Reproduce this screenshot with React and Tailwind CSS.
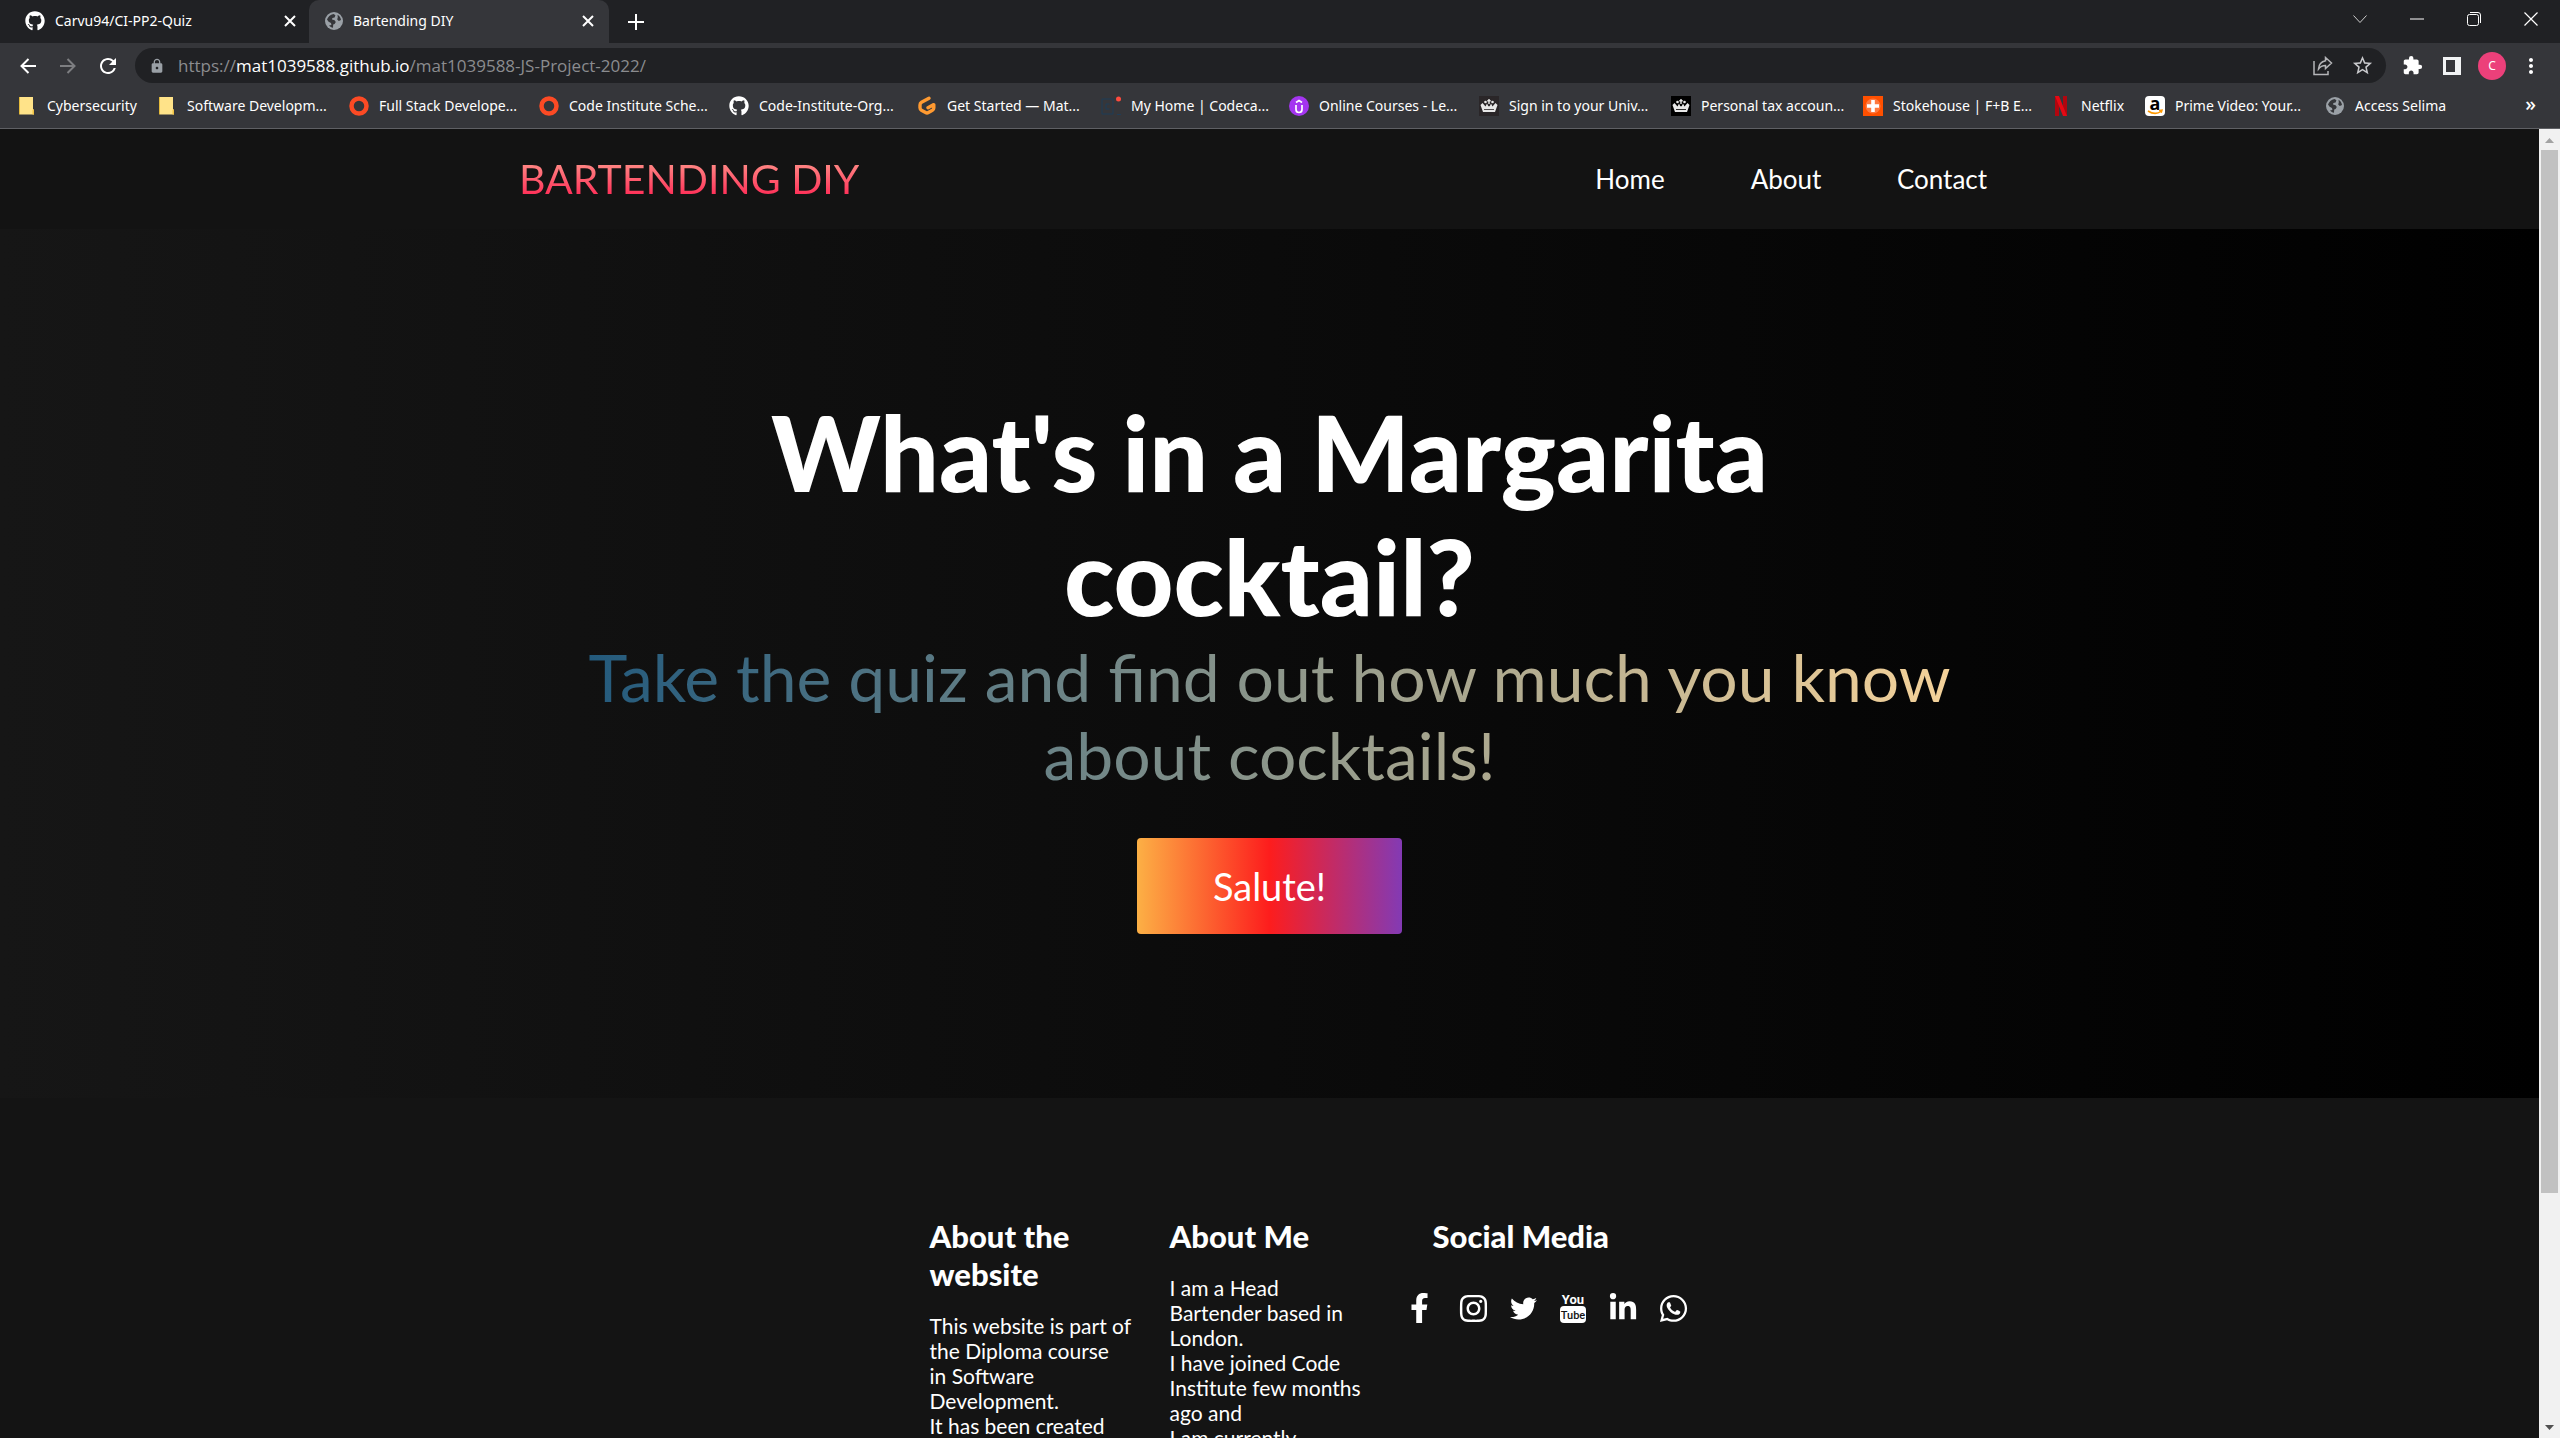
import React from "react";
import { FaFacebookF, FaInstagram, FaTwitter, FaLinkedinIn, FaWhatsapp, FaGithub } from "react-icons/fa";
import { MdExtension, MdLock, MdMoreVert, MdRefresh, MdStarBorder } from "react-icons/md";

const Globe = () => (
  <svg viewBox="0 0 18 18" className="h-[18px] w-[18px]" aria-hidden="true">
    <circle cx="9" cy="9" r="9" fill="#9aa0a6" />
    <path d="M2 7.500C3 5 5 2.600 8.600 2L10.400 3.200 9.600 5.400 7.400 6 7 7.600 9.600 8.200 10.800 10 9.600 12 8.200 12.600 8 15.800C6.600 15.600 5 14.800 4 13.600L6.400 13 6 11 3.600 9.800ZM12.500 2.800C14.600 4 15.800 6 16 8L13.800 9 12.200 7.400 12.800 5.200Z" fill="#35363a" />
  </svg>
);

const Folder = () => (
  <svg viewBox="0 0 16 20" className="h-5 w-4" aria-hidden="true">
    <path d="M1 1h13v12l1 1v4.500h-14z" fill="#ffe389" />
    <path d="M1 18.500h12.500v-4.500l1.500-.8v5.300z" fill="#f0c243" />
    <path d="M0.500 1v17.500" stroke="#e5bb3c" />
  </svg>
);

const Ring = () => (
  <svg viewBox="0 0 20 20" className="h-5 w-5" aria-hidden="true">
    <circle cx="10" cy="10" r="7.500" fill="none" stroke="#fc4a24" strokeWidth="4.500" />
  </svg>
);

const Gitpod = () => (
  <svg viewBox="0 0 20 20" className="h-5 w-5" aria-hidden="true">
    <path d="M12 2.200 4.500 6.300Q3 7.200 3 9v2.800q0 1.600 1.400 2.400l4.200 2.400q1.400.8 2.800 0l4-2.300q1.400-.8 1.400-2.400V8.600L11 11.800" fill="none" stroke="#ff9a31" strokeWidth="3.400" strokeLinejoin="round" strokeLinecap="round" />
  </svg>
);

const Codecademy = () => (
  <svg viewBox="0 0 20 20" className="h-5 w-5" aria-hidden="true">
    <path d="M1 3h11v15H1z M16 18.500h4" fill="none" stroke="#1f3d57" />
    <path d="M8.500 8H5v5h3.500" fill="none" stroke="#1f3d57" />
    <circle cx="17.500" cy="3" r="2.500" fill="#ff4b3e" />
  </svg>
);

const Udemy = () => (
  <svg viewBox="0 0 20 20" className="h-5 w-5" aria-hidden="true">
    <circle cx="10" cy="10" r="10" fill="#a435f0" />
    <path d="M7 9v4.500a3 3 0 0 0 6 0V9M7 6.500l3-2 3 2" fill="none" stroke="#fff" strokeWidth="1.700" />
  </svg>
);

const Crown = ({ bg }) => (
  <svg viewBox="0 0 20 20" className="h-5 w-5" aria-hidden="true">
    <path d="M0 0h20v20H0z" fill={bg} />
    <path d="M4 16 1.500 9 3.500 7l3 3.500L8 7.500l1.300 2.800h1.400L12 7.500l1.500 3 3-3.500 2 2L16 16z" fill="#e8e8e8" />
    <path d="M10 3v5M8.300 4.700h3.400" stroke="#e8e8e8" strokeWidth="1.400" />
    <circle cx="6.500" cy="6" r="1.300" fill="#e8e8e8" />
    <circle cx="13.500" cy="6" r="1.300" fill="#e8e8e8" />
    <path d="M5 13.500h10" stroke={bg} strokeWidth=".8" />
  </svg>
);

const Plus = () => (
  <svg viewBox="0 0 20 20" className="h-5 w-5" aria-hidden="true">
    <path d="M0 0h20v20H0z" fill="#ff5000" />
    <circle cx="10" cy="10" r="7.500" fill="#ff7a40" />
    <path d="M10 4v12M4 10h12" stroke="#fff" strokeWidth="3.600" />
  </svg>
);

const Netflix = () => (
  <svg viewBox="0 0 20 20" className="h-5 w-5" aria-hidden="true">
    <path d="M4 0h4v20H4zM12 0h4v20h-4z" fill="#b1060f" />
    <path d="M4 0h4l8 20h-4z" fill="#e50914" />
  </svg>
);

const Amazon = () => (
  <span className="relative flex h-5 w-5 justify-center rounded-sm bg-white">
    <span className="text-[18px] leading-[14px] font-bold text-black">a</span>
    <svg viewBox="0 0 20 20" className="absolute inset-0 h-5 w-5" aria-hidden="true">
      <path d="M3 15q7 4.500 13 .5M14 14.500l3-.3-.8 2.600" fill="none" stroke="#ff9900" strokeWidth="1.500" />
    </svg>
  </span>
);

const bookmarks = [
  ["Cybersecurity", <Folder />, "w-[140px]"],
  ["Software Developm...", <Folder />, "w-[192px]"],
  ["Full Stack Develope...", <Ring />, "w-[190px]"],
  ["Code Institute Sche...", <Ring />, "w-[190px]"],
  ["Code-Institute-Org...", <FaGithub className="h-5 w-5" />, "w-[188px]"],
  ["Get Started — Mat...", <Gitpod />, "w-[184px]"],
  ["My Home | Codeca...", <Codecademy />, "w-[188px]"],
  ["Online Courses - Le...", <Udemy />, "w-[190px]"],
  ["Sign in to your Univ...", <Crown bg="#2a2628" />, "w-[192px]"],
  ["Personal tax accoun...", <Crown bg="#000" />, "w-[192px]"],
  ["Stokehouse | F+B E...", <Plus />, "w-[188px]"],
  ["Netflix", <Netflix />, "w-[94px]"],
  ["Prime Video: Your...", <Amazon />, "w-[180px]"],
  ["Access Selima", <Globe />, "w-[140px]"],
];

const CloseX = () => (
  <svg viewBox="0 0 12 12" className="h-3 w-3" aria-hidden="true">
    <path d="M1 1l10 10M11 1L1 11" stroke="#fff" strokeWidth="2" />
  </svg>
);

function TabStrip() {
  return (
    <div className="flex h-[43px] shrink-0 bg-[#202124]">
      <div className="flex w-[309px] items-center pr-[13px] pb-px pl-[25px]">
        <FaGithub className="h-5 w-5" />
        <span className="ml-[10px] flex-1 pb-px text-sm">Carvu94/CI-PP2-Quiz</span>
        <button aria-label="Close tab"><CloseX /></button>
      </div>
      <div className="flex w-[300px] items-center rounded-t-[10px] bg-[#35363a] pr-[15px] pb-px pl-4">
        <Globe />
        <span className="ml-[10px] flex-1 pb-px text-sm">Bartending DIY</span>
        <button aria-label="Close tab"><CloseX /></button>
      </div>
      <button aria-label="New tab" className="ml-[19px]">
        <svg viewBox="0 0 16 16" className="h-4 w-4" aria-hidden="true"><path d="M8 0v16M0 8h16" stroke="#fff" strokeWidth="2" /></svg>
      </button>
      <div className="ml-auto flex h-[37px] items-center">
        <button aria-label="Search tabs" className="flex w-[57px] justify-center">
          <svg viewBox="0 0 14 8" className="h-2 w-[14px]"><path d="M.5.5 7 7.500 13.500.5" fill="none" stroke="#ccc" /></svg>
        </button>
        <button aria-label="Minimise" className="flex w-[57px] justify-center">
          <svg viewBox="0 0 14 2" className="h-[2px] w-[14px]"><path d="M0 1h14" stroke="#fff" /></svg>
        </button>
        <button aria-label="Restore" className="flex w-[57px] justify-center">
          <svg viewBox="0 0 14 14" className="h-[14px] w-[14px]"><path d="M.5 4.500a2 2 0 0 1 2-2h7a2 2 0 0 1 2 2v7a2 2 0 0 1-2 2h-7a2 2 0 0 1-2-2zM3 .5h8a2.500 2.500 0 0 1 2.500 2.500v8" fill="none" stroke="#fff" /></svg>
        </button>
        <button aria-label="Close window" className="flex w-[58px] justify-center">
          <svg viewBox="0 0 14 14" className="h-[14px] w-[14px]"><path d="M.5.5l13 13M13.500.5l-13 13" stroke="#fff" strokeWidth="1.200" /></svg>
        </button>
      </div>
    </div>
  );
}

function Toolbar() {
  return (
    <div className="flex h-[45px] shrink-0 items-center bg-[#35363a]">
      <div className="flex w-[135px] items-center pl-2">
        <button aria-label="Back" className="flex w-10 justify-center">
          <svg viewBox="0 0 16 16" className="h-4 w-4"><path d="M16 8H1.500M8.500 1 1.500 8l7 7" fill="none" stroke="#fff" strokeWidth="2" /></svg>
        </button>
        <button aria-label="Forward" className="flex w-10 justify-center">
          <svg viewBox="0 0 16 16" className="h-4 w-4"><path d="M0 8h14.500M7.500 1l7 7-7 7" fill="none" stroke="#7d7e81" strokeWidth="2" /></svg>
        </button>
        <button aria-label="Reload" className="flex w-10 justify-center"><MdRefresh className="h-6 w-6" /></button>
      </div>
      <div className="flex h-[35px] flex-1 items-center rounded-full bg-[#202124] pr-3 pl-[14px]">
        <MdLock className="h-4 w-4 text-[#9aa0a6]" />
        <a href="#home" className="ml-[13px] flex-1 font-['Open_Sans',sans-serif] text-[17px] text-[#8b8c8f]">
          https://<span className="text-white">mat1039588.github.io</span>/mat1039588-JS-Project-2022/
        </a>
        <button aria-label="Share" className="mr-[18px]">
          <svg viewBox="0 0 20 20" className="h-5 w-5"><path d="M1 5v13.500h14V15M12.500 1.500 18.500 7l-6 5.500V9.500Q8 9.500 5.500 13 6 6 12.500 4.800z" fill="none" stroke="#b4b5b8" strokeWidth="1.500" /></svg>
        </button>
        <button aria-label="Bookmark"><MdStarBorder className="h-[23px] w-[23px] text-[#c8c9cc]" /></button>
      </div>
      <div className="flex w-[174px] items-center pl-[6px]">
        <button aria-label="Extensions" className="flex w-10 justify-center"><MdExtension className="h-[21px] w-[21px]" /></button>
        <button aria-label="Side panel" className="flex w-10 justify-center">
          <svg viewBox="0 0 18 18" className="h-[18px] w-[18px]"><path d="M0 0h18v18H0zM3 3v12h9V3z" fill="#f1f3f4" fillRule="evenodd" /></svg>
        </button>
        <button aria-label="Profile" className="mx-[6px] h-7 w-7 rounded-full bg-[#ec407a] text-xs">C</button>
        <button aria-label="Menu" className="flex w-[38px] justify-center"><MdMoreVert className="h-6 w-6" /></button>
      </div>
    </div>
  );
}

function BookmarksBar() {
  return (
    <nav aria-label="Bookmarks" className="flex h-[41px] shrink-0 items-center border-b border-[#5f6064] bg-[#35363a] pb-[4px] pl-[17px]">
      {bookmarks.map(([label, icon, width]) => (
        <a key={label} href="#home" className={"flex shrink-0 items-center gap-[10px] text-sm whitespace-nowrap " + width}>
          <span className="flex w-5 shrink-0 justify-center">{icon}</span>
          {label}
        </a>
      ))}
      <button aria-label="More bookmarks" className="mr-6 ml-auto pb-1 text-xl leading-5 font-medium">»</button>
    </nav>
  );
}

const YouTube = () => (
  <svg viewBox="0 0 27 34" className="h-[34px] w-[27px] shrink-0 font-['Roboto',sans-serif]" aria-hidden="true">
    <text x="13" y="13" textAnchor="middle" fontSize="13" fontWeight="700" fill="#fff">You</text>
    <rect x="0" y="15" width="26" height="17" rx="4" fill="#fff" />
    <text x="13" y="28" textAnchor="middle" fontSize="11" fontWeight="500" fill="#141414">Tube</text>
  </svg>
);

const websiteLines = ["This website is part of", "the Diploma course", "in Software", "Development.", "It has been created"];
const meLines = ["I am a Head", "Bartender based in", "London.", "I have joined Code", "Institute few months", "ago and", "I am currently"];

const social = [
  ["Facebook", <FaFacebookF className="mr-2 h-[30px] w-[19px] shrink-0" />],
  ["Instagram", <FaInstagram className="h-[31px] w-[31px] shrink-0" />],
  ["Twitter", <FaTwitter className="h-[27px] w-[27px] shrink-0" />],
  ["YouTube", <YouTube />],
  ["LinkedIn", <FaLinkedinIn className="h-[30px] w-[30px] shrink-0" />],
  ["WhatsApp", <FaWhatsapp className="h-[31px] w-[31px] shrink-0" />],
];

function FooterColumn({ title, lines }) {
  return (
    <section className="w-[200px]">
      <h2 className="mb-5 text-[31px] leading-[38px] font-black">{title}</h2>
      <p className="text-[21px] leading-[25px] whitespace-nowrap">
        {lines.map((line) => <span key={line} className="block">{line}</span>)}
      </p>
    </section>
  );
}

function Page() {
  return (
    <div className="h-full flex-1 overflow-hidden bg-[#141414] font-['Lato',sans-serif] text-white">
      <header className="bg-[#131313]">
        <div className="mx-auto flex h-[100px] max-w-[1625px] items-center justify-between px-[62px]">
          <a href="#home" className="bg-linear-to-t/srgb from-[#ff0844] to-[#ffb199] bg-clip-text text-[41px] leading-[60px] text-transparent">BARTENDING DIY</a>
          <nav aria-label="Main" className="flex text-center text-[26px]">
            <a href="#home" className="w-[156px]">Home</a>
            <a href="#about" className="w-[156px]">About</a>
            <a href="#contact" className="w-[156px]">Contact</a>
          </nav>
        </div>
      </header>
      <main className="bg-linear-to-r/srgb from-[#161616] to-black pt-[161px] pb-[164px]">
        <div className="mx-auto flex max-w-[1500px] flex-col items-center text-center">
          <h1 className="text-[104px] leading-[124px] font-black">What's in a Margarita<br />cocktail?</h1>
          <p className="w-full bg-linear-to-r/srgb from-[#19547b] to-[#ffd89b] bg-clip-text text-[66px] leading-[78px] text-transparent">
            Take the quiz and find out how much you know<br />about cocktails!
          </p>
          <button className="mt-11 h-24 w-[265px] rounded bg-linear-to-r/srgb from-[#fcb045] via-[#fd1d1d] to-[#833ab4] text-[38px]">Salute!</button>
        </div>
      </main>
      <footer className="flex justify-center gap-10 pt-[119px]">
        <FooterColumn title="About the website" lines={websiteLines} />
        <FooterColumn title="About Me" lines={meLines} />
        <section className="w-[200px]">
          <h2 className="mb-9 pl-[23px] text-[31px] leading-[38px] font-black whitespace-nowrap">Social Media</h2>
          <div className="flex gap-[23px]">
            {social.map(([name, icon]) => (
              <a key={name} href="#contact" aria-label={name} className="flex h-[34px] w-[27px] shrink-0 items-center justify-center">{icon}</a>
            ))}
          </div>
        </section>
      </footer>
    </div>
  );
}

export default function App() {
  return (
    <div className="flex h-screen flex-col overflow-hidden bg-[#141414] font-['Noto_Sans',sans-serif] text-white">
      <TabStrip />
      <Toolbar />
      <BookmarksBar />
      <div className="flex min-h-0 flex-1">
        <Page />
        <div className="flex w-[21px] shrink-0 flex-col items-center bg-[#f1f1f1]" aria-hidden="true">
          <svg viewBox="0 0 21 21" className="h-[21px] w-[21px] shrink-0"><path d="M6 14h9l-4.500-5z" fill="#a3a3a3" /></svg>
          <div className="w-[17px] flex-[14] bg-[#c1c1c1]" />
          <div className="flex-[3]" />
          <svg viewBox="0 0 21 21" className="h-[21px] w-[21px] shrink-0"><path d="M6 8h9l-4.500 5z" fill="#505050" /></svg>
        </div>
      </div>
    </div>
  );
}
